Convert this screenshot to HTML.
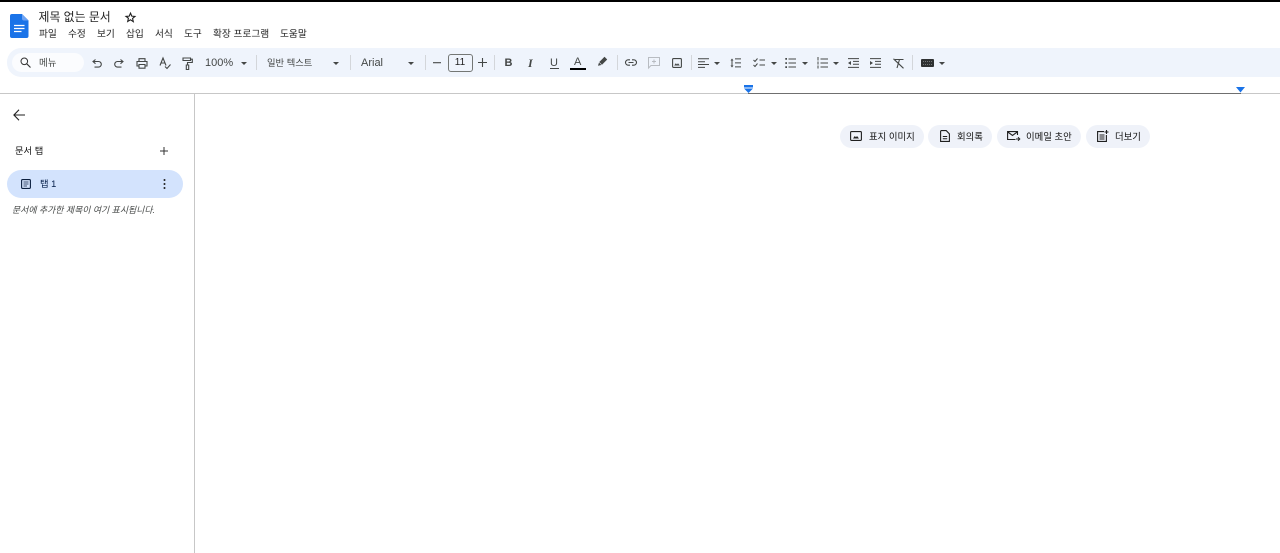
<!DOCTYPE html>
<html lang="ko">
<head>
<meta charset="utf-8">
<style>
html,body{margin:0;padding:0;width:1280px;height:553px;overflow:hidden;background:#fff;}
body{position:relative;font-family:"Liberation Sans","Noto Sans CJK KR",sans-serif;color:#1f1f1f;}
.a{position:absolute;white-space:nowrap;line-height:1;}
.m{font-size:9.7px;top:30px;color:#1f1f1f;}
.sep{position:absolute;top:55px;width:1px;height:15px;background:#d3d6da;}
svg{position:absolute;overflow:visible;}
.s{fill:none;stroke:#444746;stroke-width:1.1;}
.f{fill:#444746;}
.pill{position:absolute;top:125px;height:23px;border-radius:12px;background:#eff2f9;}
.pt{font-size:9.4px;top:131.500px;color:#111;}
</style>
</head>
<body>
<div class="a" style="left:0;top:0;width:1280px;height:2px;background:#000"></div>

<svg style="left:10px;top:13.500px" width="19" height="24" viewBox="0 0 19 24">
<path d="M2 0H12L18.500 6.500V22a2 2 0 0 1-2 2H2a2 2 0 0 1-2-2V2a2 2 0 0 1 2-2z" fill="#1a73e8"/>
<path d="M12 0L18.500 6.500H14a2 2 0 0 1-2-2z" fill="#6ea3f2"/>
<path d="M4 11.500h10.500M4 14.500h10.500M4 17.500h7.500" stroke="#fff" stroke-width="1.300"/>
</svg>
<div class="a" style="left:38.500px;top:12px;font-size:11.900px;">제목 없는 문서</div>
<svg style="left:125px;top:12px" width="11" height="11" viewBox="0 0 24 24"><path d="M12 2.500l2.800 6.500 7 .6-5.300 4.600 1.600 6.900L12 17l-6.100 3.600 1.600-6.900L2.200 9.600l7-.6z" fill="none" stroke="#1f1f1f" stroke-width="2.400"/></svg>

<div class="a m" style="left:39px">파일</div>
<div class="a m" style="left:68px">수정</div>
<div class="a m" style="left:97px">보기</div>
<div class="a m" style="left:126px">삽입</div>
<div class="a m" style="left:155px">서식</div>
<div class="a m" style="left:184px">도구</div>
<div class="a m" style="left:213px">확장 프로그램</div>
<div class="a m" style="left:280px">도움말</div>

<!-- toolbar -->
<div style="position:absolute;left:7px;top:48px;width:1273px;height:29px;background:#eff4fc;border-radius:14px 0 0 14px"></div>
<div style="position:absolute;left:12px;top:53px;width:72px;height:19px;background:#fbfcfe;border-radius:10px"></div>
<svg style="left:20px;top:57px" width="11" height="11" viewBox="0 0 11 11"><circle cx="4.300" cy="4.300" r="3.300" fill="none" stroke="#333" stroke-width="1"/><path d="M6.800 6.800L10.500 10.500" stroke="#333" stroke-width="1.100"/></svg>
<div class="a" style="left:39px;top:58.500px;font-size:9.500px;color:#444746">메뉴</div>

<svg style="left:91.500px;top:58.500px" width="10" height="9" viewBox="0 0 10 9"><path class="s" d="M1.500 2.500H6.500a2.800 2.800 0 0 1 0 5.600H2.500M3.500 .5L1 2.500 3.500 4.700" /></svg>
<svg style="left:113.500px;top:58.500px" width="10" height="9" viewBox="0 0 10 9"><path class="s" d="M8.500 2.500H3.500a2.800 2.800 0 0 0 0 5.600H7.500M6.500 .5L9 2.500 6.500 4.700" /></svg>
<svg style="left:136px;top:57.500px" width="12" height="11" viewBox="0 0 12 11"><path d="M3 3V0.700H9V3M3 8H1V3.500H11V8H9" class="s"/><path d="M3 6.500H9V10.200H3z" class="s"/></svg>
<svg style="left:159px;top:57px" width="12" height="13" viewBox="0 0 12 13"><path class="s" d="M1 8.500L4 1 7 8.500M2 6H6M6 9.500L8 11.500 11.500 7.500" /></svg>
<svg style="left:182px;top:56.500px" width="11" height="13" viewBox="0 0 11 13"><path class="s" d="M1 1H8.500V3.500H1zM8.500 2.200H10.300V5.500H5.500V8"/><path d="M4.300 8H6.700V12.500H4.300z" class="s"/></svg>
<div class="a" style="left:205px;top:58px;font-size:11px;color:#444746">100%</div>
<svg style="left:241px;top:62px" width="6" height="3"><path d="M0 0H6L3 3z" class="f"/></svg>
<div class="sep" style="left:256px"></div>
<div class="a" style="left:267px;top:58.500px;font-size:9.300px;color:#444746">일반 텍스트</div>
<svg style="left:333px;top:62px" width="6" height="3"><path d="M0 0H6L3 3z" class="f"/></svg>
<div class="sep" style="left:350px"></div>
<div class="a" style="left:361px;top:57.500px;font-size:11px;color:#444746">Arial</div>
<svg style="left:408px;top:62px" width="6" height="3"><path d="M0 0H6L3 3z" class="f"/></svg>
<div class="sep" style="left:425px"></div>
<svg style="left:433px;top:62px" width="9" height="2"><path d="M0 .7H8" stroke="#444746" stroke-width="1.100"/></svg>
<div style="position:absolute;left:448px;top:54px;width:23px;height:16px;border:1px solid #747775;border-radius:3px"></div>
<div class="a" style="left:447.500px;top:58px;width:25px;text-align:center;font-size:10px;color:#1f1f1f">11</div>
<svg style="left:478px;top:58px" width="9" height="9"><path d="M0 4.500H9M4.500 0V9" stroke="#444746" stroke-width="1.100"/></svg>
<div class="sep" style="left:494px"></div>
<div class="a" style="left:504.500px;top:58px;font-size:11px;font-weight:bold;color:#444746">B</div>
<div class="a" style="left:528px;top:56.500px;font-size:12px;font-style:italic;font-weight:bold;font-family:'Liberation Serif',serif;color:#444746">I</div>
<div class="a" style="left:550px;top:57.500px;font-size:11px;color:#444746">U</div>
<div style="position:absolute;left:550px;top:68px;width:9px;height:1px;background:#444746"></div>
<div class="a" style="left:574px;top:57px;font-size:11px;color:#444746">A</div>
<div style="position:absolute;left:570px;top:67.500px;width:16px;height:2.500px;background:#000"></div>
<svg style="left:597px;top:56px" width="11" height="11" viewBox="0 0 11 11"><path d="M7.500 0.800L10.200 3.500 5 8.700 2.300 6z" class="f"/><path d="M2 6.500L4.500 9 1 9.800z" class="f"/></svg>
<div class="sep" style="left:617px"></div>
<svg style="left:625px;top:59px" width="12" height="7" viewBox="0 0 12 7"><path class="s" d="M5 .8H3.200a2.700 2.700 0 0 0 0 5.400H5M7 .8H8.800a2.700 2.700 0 0 1 0 5.400H7M3.500 3.500H8.500"/></svg>
<svg style="left:648px;top:57px" width="12" height="12" viewBox="0 0 12 12"><path d="M.5.500H11.500V8.500H3L.5 11z" fill="none" stroke="#b8bcc2"/><path d="M6 2.500V6.500M4 4.500H8" stroke="#b8bcc2"/></svg>
<svg style="left:672px;top:58px" width="10" height="10" viewBox="0 0 10 10"><rect x=".6" y=".6" width="8.800" height="8.800" rx="1" fill="none" stroke="#444746" stroke-width="1.100"/><path d="M2.200 7.500L3.800 5.200 5 6.500 6 5.200 7.800 7.500z" class="f"/></svg>
<div class="sep" style="left:691px"></div>
<svg style="left:698px;top:58px" width="11" height="10"><path d="M0 .7H11M0 3.700H7M0 6.500H11M0 9.400H7" stroke="#444746" stroke-width="1"/></svg>
<svg style="left:714px;top:62px" width="6" height="3"><path d="M0 0H6L3 3z" class="f"/></svg>
<svg style="left:730px;top:58px" width="11" height="10"><path d="M5 .9H11M5 4.900H11M5 8.900H11" stroke="#444746" stroke-width="1"/><path d="M2 .5L3.500 2.500H.5zM2 9.500L3.500 7.500H.5z" class="f"/><path d="M2 2V8" stroke="#444746" stroke-width="1"/></svg>
<svg style="left:753px;top:58px" width="12" height="10"><path d="M.5 2L2 3.500 4.500.500M.5 7L2 8.500 4.500 5.500" fill="none" stroke="#444746" stroke-width="1"/><path d="M6.500 2H12M6.500 7H12" stroke="#444746" stroke-width="1.100"/></svg>
<svg style="left:771px;top:62px" width="6" height="3"><path d="M0 0H6L3 3z" class="f"/></svg>
<svg style="left:785px;top:58px" width="11" height="10"><path d="M3.500 1H11M3.500 5H11M3.500 9H11" stroke="#444746" stroke-width="1"/><path d="M.3 0h1.700v1.700h-1.700zM.3 4.200h1.700v1.700h-1.700zM.3 8.300h1.700v1.700h-1.700z" class="f"/></svg>
<svg style="left:802px;top:62px" width="6" height="3"><path d="M0 0H6L3 3z" class="f"/></svg>
<svg style="left:817px;top:57px" width="11" height="12"><path d="M3.500 2H11M3.500 6H11M3.500 10H11" stroke="#444746" stroke-width="1"/><path d="M1 0V3.500M1 4.500V7.500M1 8.500V11.500" stroke="#444746" stroke-width="1"/></svg>
<svg style="left:833px;top:62px" width="6" height="3"><path d="M0 0H6L3 3z" class="f"/></svg>
<svg style="left:848px;top:58px" width="11" height="10"><path d="M0 .6H11M5 3.400H11M5 6.200H11M0 9.400H11" stroke="#444746" stroke-width="1"/><path d="M3 3V7L0 5z" class="f"/></svg>
<svg style="left:870px;top:58px" width="11" height="10"><path d="M0 .6H11M5 3.400H11M5 6.200H11M0 9.400H11" stroke="#444746" stroke-width="1"/><path d="M0 3V7L3 5z" class="f"/></svg>
<svg style="left:893px;top:58px" width="11" height="11" viewBox="0 0 11 11"><path d="M.5.800L10.500 10.300M2 1.500H10.500M6.500 1.500L4 10" fill="none" stroke="#444746" stroke-width="1.100"/></svg>
<div class="sep" style="left:912px"></div>
<svg style="left:921px;top:59px" width="13" height="8"><rect width="13" height="8" rx="1" fill="#2f3132"/><path d="M2 2.500H11M2 5.500H11" stroke="#8b8d8e" stroke-width=".8" stroke-dasharray="1 1"/></svg>
<svg style="left:939px;top:62px" width="6" height="3"><path d="M0 0H6L3 3z" class="f"/></svg>

<!-- ruler -->
<div style="position:absolute;left:0;top:93px;width:1280px;height:1px;background:#c7c7c7"></div>
<div style="position:absolute;left:748px;top:93px;width:493px;height:1px;background:#6f6f6f"></div>
<svg style="left:744px;top:85px" width="9" height="8"><rect width="9" height="2.500" fill="#1a73e8"/><path d="M0 3.500H9L4.500 8z" fill="#1a73e8"/></svg>
<svg style="left:1236px;top:87px" width="9" height="6"><path d="M0 0H9L4.500 5.500z" fill="#1a73e8"/></svg>

<!-- sidebar -->
<div style="position:absolute;left:194px;top:94px;width:1px;height:459px;background:#c7c7c7"></div>
<svg style="left:13px;top:109px" width="12" height="12" viewBox="0 0 12 12"><path d="M12 6H1M6 .8L.9 6 6 11.200" fill="none" stroke="#1f1f1f" stroke-width="1.100"/></svg>
<div class="a" style="left:15px;top:146.500px;font-size:9.300px;color:#111">문서 탭</div>
<svg style="left:160px;top:147px" width="8" height="8"><path d="M0 4H8M4 0V8" stroke="#333" stroke-width="1"/></svg>
<div style="position:absolute;left:7px;top:170px;width:176px;height:28px;border-radius:14px;background:#d3e3fd"></div>
<svg style="left:21px;top:179px" width="10" height="10" viewBox="0 0 10 10"><rect x=".6" y=".6" width="8.800" height="8.800" rx="1" fill="none" stroke="#0b1f3f" stroke-width="1.100"/><path d="M2.500 3H7.500M2.500 5H7.500M2.500 7H6" stroke="#0b1f3f" stroke-width=".8"/></svg>
<div class="a" style="left:40px;top:179.500px;font-size:9.300px;color:#041e49">탭 1</div>
<svg style="left:163px;top:179px" width="3" height="10"><circle cx="1.500" cy="1" r="1" fill="#1f1f1f"/><circle cx="1.500" cy="5" r="1" fill="#1f1f1f"/><circle cx="1.500" cy="9" r="1" fill="#1f1f1f"/></svg>
<div class="a" style="left:12px;top:205.500px;font-size:8.900px;font-style:italic;color:#444746">문서에 추가한 제목이 여기 표시됩니다.</div>

<!-- chips -->
<div class="pill" style="left:840px;width:84px"></div>
<div class="pill" style="left:928px;width:64px"></div>
<div class="pill" style="left:997px;width:84px"></div>
<div class="pill" style="left:1086px;width:63.500px"></div>
<svg style="left:850px;top:131px" width="12" height="10" viewBox="0 0 12 10"><rect x=".6" y=".6" width="10.800" height="8.800" rx="1" fill="none" stroke="#1f1f1f" stroke-width="1.100"/><path d="M3 7.500L4.800 5 6 6.300 7 5 9 7.500z" fill="#1f1f1f"/></svg>
<div class="a pt" style="left:869px">표지 이미지</div>
<svg style="left:939.500px;top:130px" width="10" height="12" viewBox="0 0 10 12"><path d="M1.200.6H6.200L9.400 3.800V11.400H.6V1.200z" fill="none" stroke="#1f1f1f" stroke-width="1.100"/><path d="M2.800 6.500H7.200M2.800 8.700H7.200" stroke="#1f1f1f"/></svg>
<div class="a pt" style="left:957px">회의록</div>
<svg style="left:1007px;top:130.500px" width="13" height="11" viewBox="0 0 13 11"><path d="M8.500 8.500H.6V.6H10.500V4M.8 1L5.500 4.500 10.300 1" fill="none" stroke="#1f1f1f" stroke-width="1.100"/><path d="M9 8H12.500M11 6.200L12.800 8 11 9.800" fill="none" stroke="#1f1f1f"/></svg>
<div class="a pt" style="left:1026px">이메일 초안</div>
<svg style="left:1096.500px;top:130px" width="12" height="12" viewBox="0 0 12 12"><path d="M7 1.600H.6V11.400H9.400V5" fill="none" stroke="#1f1f1f" stroke-width="1.100"/><path d="M2.500 5H7.500M2.500 7H7.500M2.500 9H7.500" stroke="#1f1f1f"/><path d="M9.500 0V4M7.500 2H11.500" stroke="#1f1f1f" stroke-width="1.100"/></svg>
<div class="a pt" style="left:1115px">더보기</div>
</body>
</html>
